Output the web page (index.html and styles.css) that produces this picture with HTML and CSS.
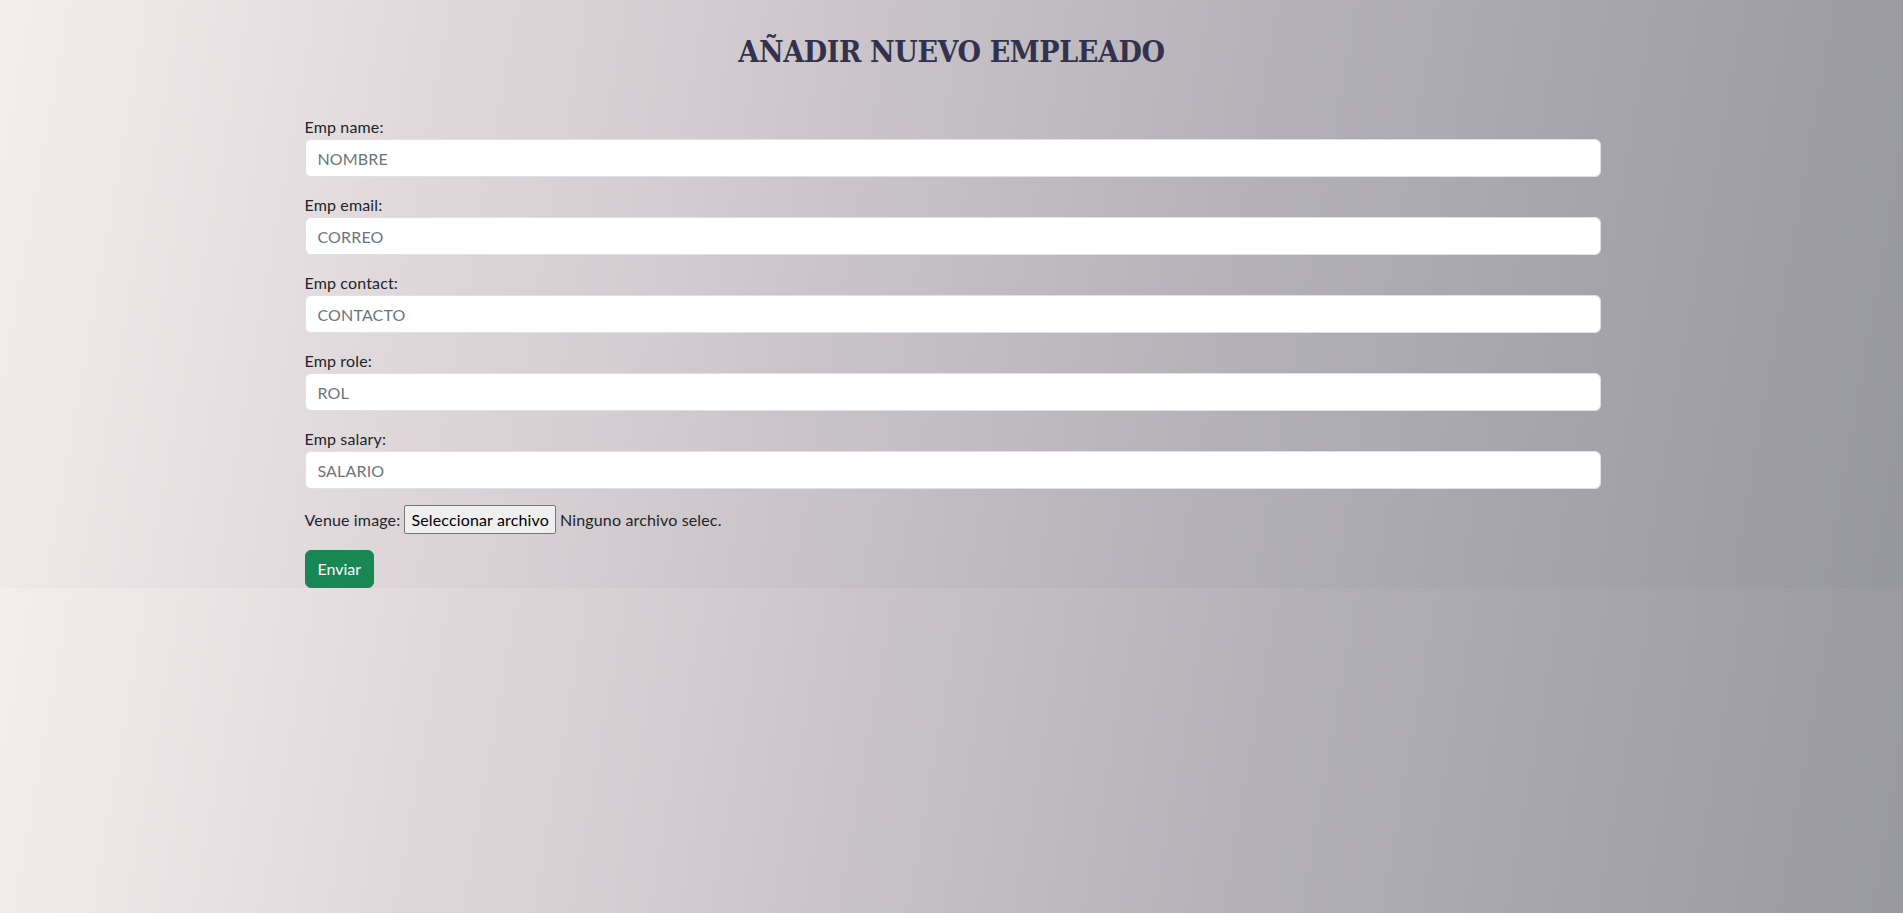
FILE: index.html
```html
<!DOCTYPE html>
<html lang="es">
<head>
<meta charset="utf-8">
<title>Añadir nuevo empleado</title>
<link rel="stylesheet" href="styles.css">
</head>
<body>
<h2 class="page-title">AÑADIR NUEVO EMPLEADO</h2>
<div class="container">
  <form class="emp-form">
    <div class="field">
      <label class="field-label" for="name">Emp name:</label>
      <input class="form-control" id="name" type="text" placeholder="NOMBRE">
    </div>
    <div class="field">
      <label class="field-label" for="email">Emp email:</label>
      <input class="form-control" id="email" type="text" placeholder="CORREO">
    </div>
    <div class="field">
      <label class="field-label" for="contact">Emp contact:</label>
      <input class="form-control" id="contact" type="text" placeholder="CONTACTO">
    </div>
    <div class="field">
      <label class="field-label" for="role">Emp role:</label>
      <input class="form-control" id="role" type="text" placeholder="ROL">
    </div>
    <div class="field">
      <label class="field-label" for="salary">Emp salary:</label>
      <input class="form-control" id="salary" type="text" placeholder="SALARIO">
    </div>
    <div class="file-row">
      <span class="file-label">Venue image:</span>
      <button type="button" class="file-btn">Seleccionar archivo</button>
      <span class="file-status">Ninguno archivo selec.</span>
    </div>
    <button type="button" class="btn-submit">Enviar</button>
  </form>
</div>
</body>
</html>
```
FILE: styles.css
```css
html {
  margin: 0;
}
body {
  margin: 0;
  font-family: "Segoe UI", Lato, "Noto Sans", sans-serif;
  font-size: 16px;
  line-height: 1.5;
  letter-spacing: 0.15px;
  color: #212529;
  background: linear-gradient(100deg, #f5eded 0%, #d3ccd0 35%, #b3b0b7 65%, #97979e 100%);
}
.page-title {
  margin: 0;
  padding-top: 32px;
  height: 43px;
  text-align: center;
  font-family: "DejaVu Serif", serif;
  font-stretch: condensed;
  font-weight: 700;
  font-size: 30px;
  line-height: 40px;
  letter-spacing: -0.4px;
  color: #32324f;
}
.container {
  width: 1296px;
  margin-left: calc(50% - 647px);
  padding-top: 40px;
}
.emp-form {
  display: flex;
  flex-direction: column;
}
.field {
  display: flex;
  flex-direction: column;
  margin-bottom: 16px;
}
.field-label {
  line-height: 24px;
}
.form-control {
  box-sizing: border-box;
  height: 38px;
  padding: 6px 12px;
  font-family: inherit;
  font-size: 16px;
  letter-spacing: inherit;
  color: #212529;
  background: #fff;
  border: 1px solid #dee2e6;
  border-radius: 6px;
  outline: none;
}
.form-control::placeholder {
  color: #6c757d;
}
.file-row {
  display: flex;
  align-items: center;
  gap: 4px;
  height: 29px;
  margin-bottom: 16px;
}
.file-btn {
  box-sizing: border-box;
  height: 29px;
  padding: 0 6px;
  font-family: inherit;
  font-size: 16px;
  letter-spacing: inherit;
  color: #000;
  background: #efefef;
  border: 1px solid #767676;
  border-radius: 2px;
}
.btn-submit {
  align-self: flex-start;
  box-sizing: border-box;
  height: 38px;
  padding: 6px 12px;
  font-family: inherit;
  font-size: 16px;
  letter-spacing: 0;
  line-height: 24px;
  color: #fff;
  background: #198754;
  border: 1px solid #198754;
  border-radius: 6px;
}
```
